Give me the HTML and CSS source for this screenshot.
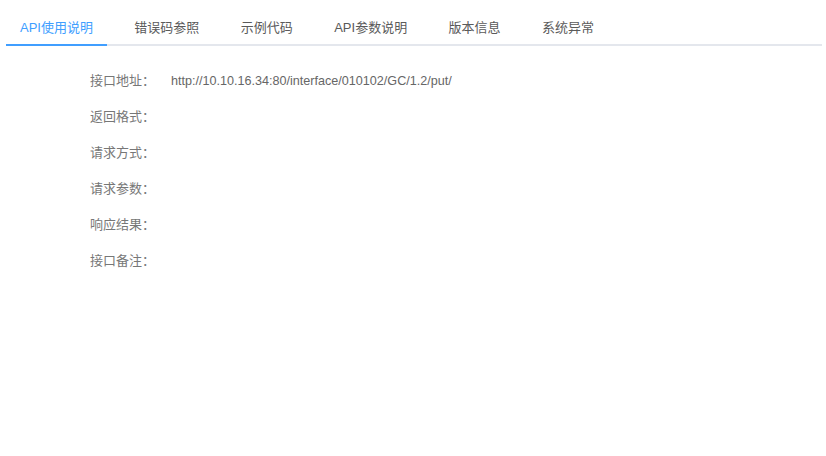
FILE: index.html
```html
<!DOCTYPE html>
<html lang="zh">
<head>
<meta charset="utf-8">
<link rel="stylesheet" href="styles.css">
</head>
<body>
<div class="page">
  <div class="tabs">
    <div class="tab active">API使用说明</div>
    <div class="tab">错误码参照</div>
    <div class="tab">示例代码</div>
    <div class="tab">API参数说明</div>
    <div class="tab">版本信息</div>
    <div class="tab">系统异常</div>
  </div>
  <div class="info">
    <div class="row"><span class="label">接口地址：</span><span class="value">http://10.10.16.34:80/interface/010102/GC/1.2/put/</span></div>
    <div class="row"><span class="label">返回格式：</span><span class="value"></span></div>
    <div class="row"><span class="label">请求方式：</span><span class="value"></span></div>
    <div class="row"><span class="label">请求参数：</span><span class="value"></span></div>
    <div class="row"><span class="label">响应结果：</span><span class="value"></span></div>
    <div class="row"><span class="label">接口备注：</span><span class="value"></span></div>
  </div>
</div>
</body>
</html>
```

FILE: styles.css
```css
html, body {
  margin: 0;
  padding: 0;
  background: #fff;
}
body {
  font-family: "Liberation Sans", Arial, "Noto Sans CJK SC", sans-serif;
  font-size: 13px;
}
.page {
  padding: 12px 4px 0 6px;
}
.tabs {
  display: flex;
  gap: 13.4px;
  border-bottom: 2px solid #e4e7ed;
}
.tab {
  padding: 0 14px;
  height: 32px;
  line-height: 32px;
  color: #5a5a5a;
  margin-bottom: -2px;
  border-bottom: 2px solid transparent;
}
.tab.active {
  color: #409eff;
  border-bottom-color: #409eff;
}
.info {
  padding: 25px 0 0 84px;
  display: flex;
  flex-direction: column;
}
.row {
  display: flex;
  height: 36px;
  line-height: 20px;
}
.label {
  width: 81px;
  color: #777;
}
.value {
  color: #666;
  font-size: 12.6px;
}
```
